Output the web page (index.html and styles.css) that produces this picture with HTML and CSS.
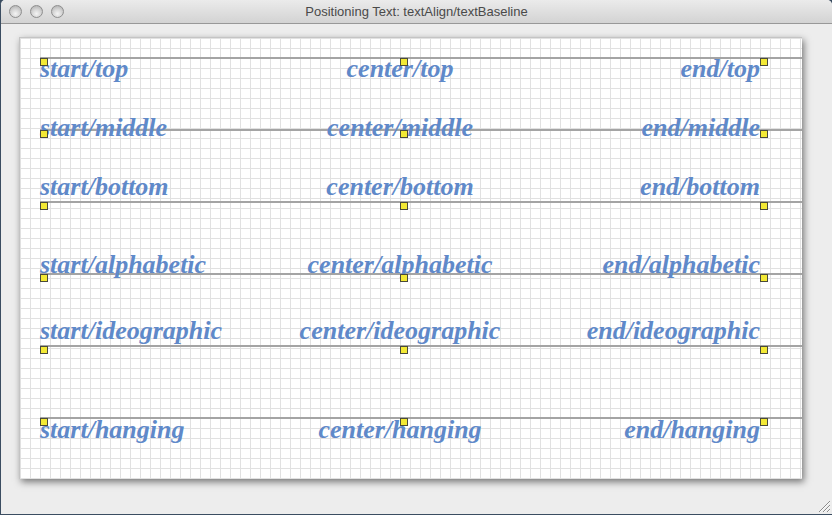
FILE: index.html
```html
<!DOCTYPE html>
<html>
<head>
<meta charset="utf-8">
<title>Positioning Text</title>
<link rel="stylesheet" href="styles.css">
</head>
<body>
<div class="window">
  <div class="titlebar">
    <div class="lights">
      <span class="light"></span><span class="light"></span><span class="light"></span>
    </div>
    <div class="title">Positioning Text: textAlign/textBaseline</div>
  </div>
  <div class="content">
    <div class="canvas">
      <div class="row r1">
        <div class="rule"></div>
        <span class="label start">start/top</span><span class="label center">center/top</span><span class="label end">end/top</span>
        <span class="dot d-start"></span><span class="dot d-center"></span><span class="dot d-end"></span>
      </div>
      <div class="row r2">
        <div class="rule"></div>
        <span class="label start">start/middle</span><span class="label center">center/middle</span><span class="label end">end/middle</span>
        <span class="dot d-start"></span><span class="dot d-center"></span><span class="dot d-end"></span>
      </div>
      <div class="row r3">
        <div class="rule"></div>
        <span class="label start">start/bottom</span><span class="label center">center/bottom</span><span class="label end">end/bottom</span>
        <span class="dot d-start"></span><span class="dot d-center"></span><span class="dot d-end"></span>
      </div>
      <div class="row r4">
        <div class="rule"></div>
        <span class="label start">start/alphabetic</span><span class="label center">center/alphabetic</span><span class="label end">end/alphabetic</span>
        <span class="dot d-start"></span><span class="dot d-center"></span><span class="dot d-end"></span>
      </div>
      <div class="row r5">
        <div class="rule"></div>
        <span class="label start">start/ideographic</span><span class="label center">center/ideographic</span><span class="label end">end/ideographic</span>
        <span class="dot d-start"></span><span class="dot d-center"></span><span class="dot d-end"></span>
      </div>
      <div class="row r6">
        <div class="rule"></div>
        <span class="label start">start/hanging</span><span class="label center">center/hanging</span><span class="label end">end/hanging</span>
        <span class="dot d-start"></span><span class="dot d-center"></span><span class="dot d-end"></span>
      </div>
    </div>
  </div>
  <svg class="grip" width="14" height="14" viewBox="0 0 14 14">
    <path d="M13 2 L2 13 M13 6 L6 13 M13 10 L10 13" stroke="#8c8c8c" stroke-width="1"/>
    <path d="M13 3 L3 13 M13 7 L7 13 M13 11 L11 13" stroke="#fafafa" stroke-width="1"/>
  </svg>
</div>
</body>
</html>
```

FILE: styles.css
```css
* { box-sizing: border-box; }
html, body { margin: 0; padding: 0; background: #3b4d61; }
.window {
  position: relative;
  width: 832px;
  height: 515px;
  background: #ededed;
  border-left: 1px solid #3b4d61;
  border-bottom: 1px solid #3b4d61;
  border-radius: 5px 5px 0 0;
  overflow: hidden;
  display: flex;
  flex-direction: column;
}
.titlebar {
  position: relative;
  height: 24px;
  flex: none;
  background: linear-gradient(#ebebeb, #d3d3d3);
  border-bottom: 1px solid #989898;
  display: flex;
  align-items: center;
}
.lights { display: flex; gap: 8px; padding-left: 8px; }
.light {
  width: 13px; height: 13px; border-radius: 50%;
  background: radial-gradient(circle at 50% 70%, #f4f4f4 0%, #d6d6d6 45%, #a9a9a9 100%);
  border: 1px solid #8e8e8e;
}
.title {
  position: absolute; left: 0; right: 0; top: 4px;
  text-align: center;
  font: 13px "Liberation Sans", Arial, sans-serif;
  color: #4a4a4a;
}
.content { flex: 1; padding: 13px 0 0 18px; }
.canvas {
  position: relative;
  width: 783px;
  height: 442px;
  border-top: 1px solid #c4c4c4;
  border-left: 1px solid #c4c4c4;
  background-color: #fff;
  background-image:
    linear-gradient(to right, #e1e1e1 1px, transparent 1px),
    linear-gradient(to bottom, #e1e1e1 1px, transparent 1px);
  background-size: 10px 10px;
  box-shadow: 2px 3px 7px rgba(0,0,0,0.5);
}
.row {
  position: absolute; left: 20px; right: 0; height: 0;
  font: italic bold 26px "Liberation Serif", "Times New Roman", serif;
}
.r1 { top: 19px; --b: 21px; }
.r2 { top: 91px; --b: 8px; }
.r3 { top: 163px; --b: -5px; }
.r4 { top: 235px; --b: 1px; }
.r5 { top: 307px; --b: -5px; }
.r6 { top: 379px; --b: 22px; }
.rule { position: absolute; left: 0; right: 0; top: 0; height: 2px; background: #a4a4a4; }
.dot {
  position: absolute; top: 1px; width: 8px; height: 8px;
  background: #f3e935; border: 1px solid #4a4a3a;
}
.d-start { left: 0; }
.d-center { left: 360px; }
.d-end { left: 720px; }
.label {
  position: absolute;
  top: calc(var(--b) - 0.84em);
  line-height: 1;
  white-space: nowrap;
  color: #5f89c9;
}
.start { left: 0; }
.center { left: 360px; transform: translateX(-50%); }
.end { left: 720px; transform: translateX(-100%); }
.grip { position: absolute; right: 1px; bottom: 1px; }
```
